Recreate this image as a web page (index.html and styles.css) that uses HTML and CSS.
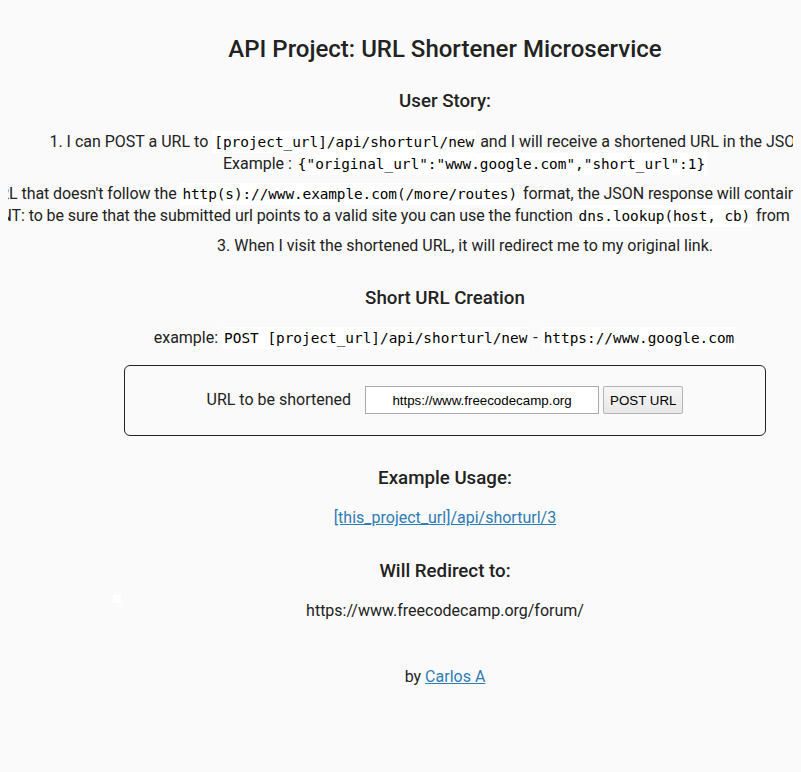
FILE: index.html
```html
<!DOCTYPE html>
<html lang="en">
<head>
<meta charset="utf-8">
<title>URL Shortener Microservice | freeCodeCamp.org</title>
<link rel="stylesheet" href="styles.css">
</head>
<body>
<div class="container">
  <h2 class="title">API Project: URL Shortener Microservice</h2>
  <h3 class="story-head">User Story:</h3>
  <ol class="stories">
    <li class="story">
      <span class="story-line num">I can POST a URL to <code>[project_url]/api/shorturl/new</code> and I will receive a shortened URL in the JSON response.</span>
      <span class="story-line">Example : <code>{"original_url":"www.google.com","short_url":1}</code></span>
    </li>
    <li class="story story-tight">
      <span class="story-line num">If I pass an invalid URL that doesn't follow the <code>http(s)://www.example.com(/more/routes)</code> format, the JSON response will contain an error like <code>{"error":"invalid URL"}</code></span>
      <span class="story-line">HINT: to be sure that the submitted url points to a valid site you can use the function <code>dns.lookup(host, cb)</code> from the <code>dns</code> core module.</span>
    </li>
    <li class="story">
      <span class="story-line num">When I visit the shortened URL, it will redirect me to my original link.</span>
    </li>
  </ol>

  <h3 class="section-head">Short URL Creation</h3>
  <p class="line">example: <code>POST [project_url]/api/shorturl/new</code> - <code>https://www.google.com</code></p>
  <form class="user-entries" action="api/shorturl/new" method="POST">
    <label class="entry-label" for="url_input">URL to be shortened</label>
    <input id="url_input" class="url-input" type="text" name="url" value="https://www.freecodecamp.org">
    <button class="post-btn" type="submit">POST URL</button>
  </form>

  <h3 class="section-head after-form">Example Usage:</h3>
  <p class="line"><a class="link" href="#">[this_project_url]/api/shorturl/3</a></p>

  <h3 class="section-head">Will Redirect to:</h3>
  <p class="line">https://www.freecodecamp.org/forum/</p>

  <div class="footer">
    <p class="line">by <a class="link" href="#">Carlos A</a></p>
  </div>
</div>
<span class="speck"></span>
</body>
</html>
```

FILE: styles.css
```css
html, body {
  background-color: #fafafa;
}

body {
  margin: 8px;
  font-family: Roboto, "Noto Sans", sans-serif;
  font-size: 16px;
  color: #222;
  text-align: center;
  line-height: 1.4em;
}

.container {
  width: 874px;
  padding: 0;
}

.title {
  font-size: 24px;
  font-weight: 500;
  margin: 25px 0 0;
  line-height: 33.6px;
}

.story-head {
  font-size: 18.72px;
  font-weight: 500;
  line-height: 26px;
  margin: 21px 0 17px;
}

.section-head {
  font-size: 18.72px;
  font-weight: 500;
  line-height: 26px;
  margin: 28px 0 16px;
}

.section-head.after-form {
  margin-top: 29px;
}

.stories {
  margin: 0 0 -1px;
  padding: 0 0 0 40px;
  list-style: none;
  counter-reset: story;
}

.story {
  display: flex;
  flex-direction: column;
  align-items: center;
  margin-bottom: 7.6px;
  counter-increment: story;
}

.story-tight .story-line {
  letter-spacing: -0.085px;
}

.story-line {
  white-space: nowrap;
  flex: none;
}

.num::before {
  content: counter(story) ". ";
}

code {
  font-family: "DejaVu Sans Mono", monospace;
  font-size: 14.4px;
  padding: 3px 2px;
  color: #000;
  background-color: #fff;
}

.line {
  margin: 0;
}

.user-entries {
  border: 1px solid #222;
  border-radius: 6px;
  width: 600px;
  margin: 16px auto 0;
  padding: 20px 20px 21px;
  display: flex;
  align-items: center;
  justify-content: center;
  box-sizing: content-box;
  height: 28px;
}

.entry-label {
  margin-right: 14px;
}

.url-input {
  box-sizing: border-box;
  width: 234px;
  height: 28px;
  border: 1px solid #a9a9a9;
  background: #fff;
  font-family: "Liberation Sans", Arial, sans-serif;
  font-size: 13.33px;
  color: #000;
  text-align: center;
  padding: 0 4px;
  margin: 0 4px 0 0;
}

.post-btn {
  box-sizing: border-box;
  height: 28px;
  padding: 0 6px;
  border: 1px solid #b4b4b4;
  border-radius: 2px;
  background: linear-gradient(#f6f6f6, #e8e8e8);
  font-family: "Liberation Sans", Arial, sans-serif;
  font-size: 13.33px;
  color: #000;
  margin: 0;
}

.link {
  color: #2f7cb6;
  text-decoration: underline;
}

.footer {
  margin-top: 44px;
}

.speck {
  position: absolute;
  left: 113px;
  top: 595px;
  width: 8px;
  height: 8px;
  background: #fff;
}
```
